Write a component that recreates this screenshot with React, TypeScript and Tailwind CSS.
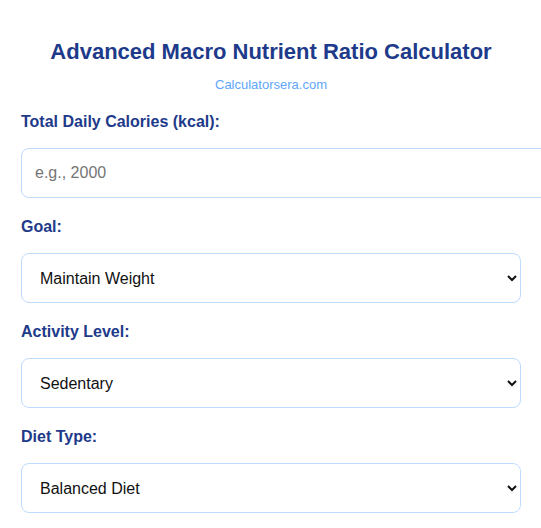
import React from "react";

const fieldLabel =
  "block text-[16px] leading-[18px] font-bold text-[#1e3a8a]";
const control =
  "block h-[50px] rounded-[8px] border border-[#bfdbfe] bg-white text-[16px] text-[#111] outline-none";

function SelectField({
  label,
  options,
}: {
  label: string;
  options: string[];
}) {
  return (
    <div className="flex flex-col gap-[17px]">
      <label className={fieldLabel}>{label}</label>
      <select className={`${control} w-full px-[14px]`} defaultValue={options[0]}>
        {options.map((o) => (
          <option key={o}>{o}</option>
        ))}
      </select>
    </div>
  );
}

export default function App() {
  return (
    <div
      className="min-h-[528px] w-full overflow-hidden bg-white"
      style={{ fontFamily: '"Liberation Sans", Arial, sans-serif' }}
    >
      <div className="w-[500px] ml-[21px] pt-[39px]">
        <h1 className="text-center text-[22px] leading-[26px] font-bold text-[#1e3a8a]">
          Advanced Macro Nutrient Ratio Calculator
        </h1>
        <p className="mt-[12px] text-center text-[13px] leading-[16px] text-[#60a5fa]">
          Calculatorsera.com
        </p>

        <div className="mt-[20px] flex flex-col gap-[20px]">
          <div className="flex flex-col gap-[17px]">
            <label className={fieldLabel}>Total Daily Calories (kcal):</label>
            <input
              type="number"
              placeholder="e.g., 2000"
              className={`${control} w-[calc(100%+28px)] px-[13px] placeholder:text-[#757575]`}
            />
          </div>
          <SelectField
            label="Goal:"
            options={["Maintain Weight", "Lose Weight", "Gain Muscle"]}
          />
          <SelectField
            label="Activity Level:"
            options={[
              "Sedentary",
              "Lightly Active",
              "Moderately Active",
              "Very Active",
            ]}
          />
          <SelectField
            label="Diet Type:"
            options={[
              "Balanced Diet",
              "Low Carb",
              "High Protein",
              "Ketogenic",
            ]}
          />
        </div>
      </div>
    </div>
  );
}
